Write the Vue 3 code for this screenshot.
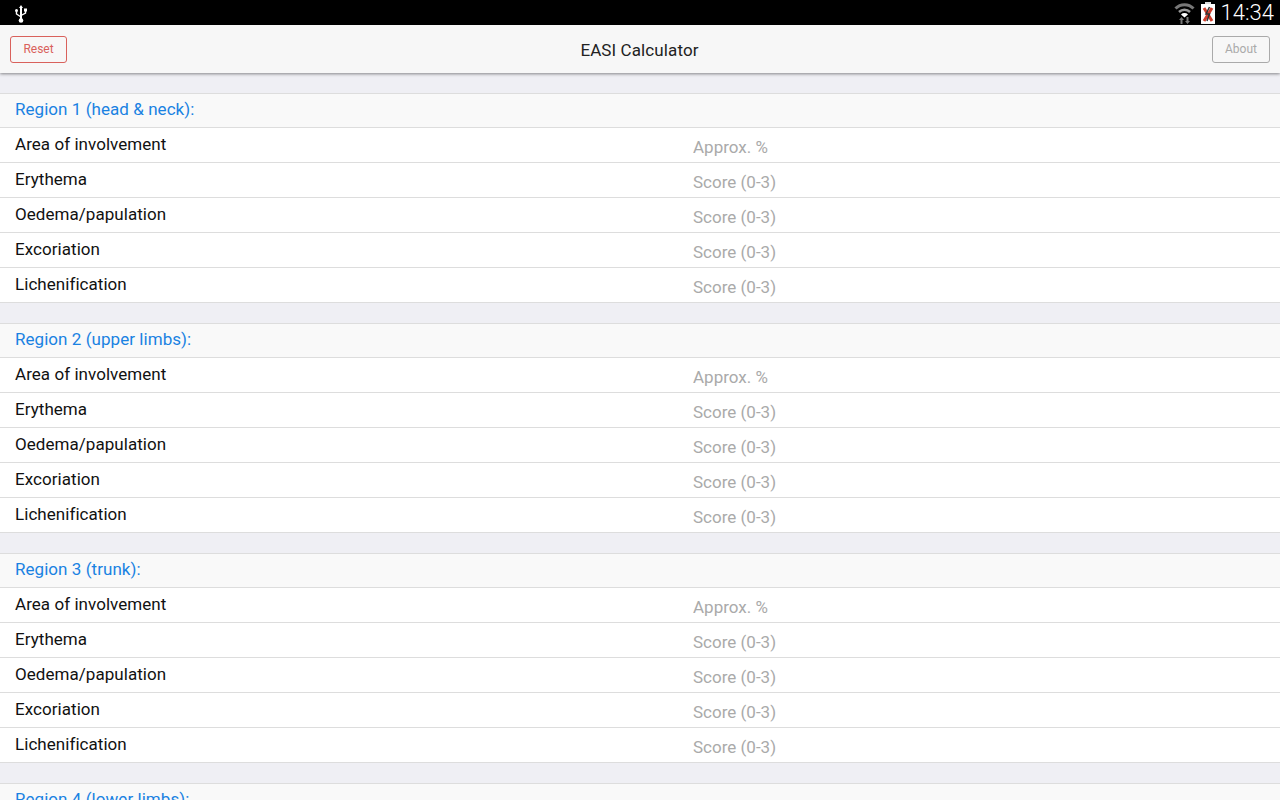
<script setup>
const rows = [
  { label: 'Area of involvement', hint: 'Approx. %' },
  { label: 'Erythema', hint: 'Score (0-3)' },
  { label: 'Oedema/papulation', hint: 'Score (0-3)' },
  { label: 'Excoriation', hint: 'Score (0-3)' },
  { label: 'Lichenification', hint: 'Score (0-3)' },
]

const regions = [
  'Region 1 (head & neck):',
  'Region 2 (upper limbs):',
  'Region 3 (trunk):',
  'Region 4 (lower limbs):',
]
</script>

<template>
  <div class="screen">
    <div class="status-bar">
      <svg class="usb" width="14" height="20" viewBox="0 0 14 20">
        <path d="M7 1 L9 4 H8 V15 H6 V4 H5 Z" fill="#fff" />
        <circle cx="7" cy="16.500" r="2.300" fill="#fff" />
        <path d="M7 13 L2.500 10 V7.500" fill="none" stroke="#fff" stroke-width="1.400" />
        <circle cx="2.500" cy="6.500" r="1.500" fill="#fff" />
        <path d="M7 11.500 L11.500 9 V7" fill="none" stroke="#fff" stroke-width="1.400" />
        <rect x="10" y="4.500" width="3" height="3" fill="#fff" />
      </svg>
      <div class="status-right">
        <svg width="21" height="22" viewBox="0 0 21 22">
          <path d="M1.500 6.500 A12.500 12.500 0 0 1 19.500 6.500" fill="none" stroke="#777" stroke-width="3" />
          <path d="M5 10 A8 8 0 0 1 16 10" fill="none" stroke="#999" stroke-width="2.500" />
          <path d="M7 12.500 A5 5 0 0 1 14 12.500 L10.500 15.500 Z" fill="#fff" />
          <path d="M7.500 15 L10 18 H8.500 V22 H6.500 V18 H5 Z" fill="#777" />
          <path d="M13.500 22 L16 19 H14.500 V15 H12.500 V19 H11 Z" fill="#777" />
        </svg>
        <svg class="battery" width="14" height="22" viewBox="0 0 14 22">
          <rect x="4" y="0" width="6" height="2" fill="#ddd" />
          <rect x="0" y="2" width="14" height="20" fill="#fff" />
          <path d="M3 6 L11 19 M11 6 L3 19" stroke="#d0402e" stroke-width="3" />
          <path d="M8.500 5 L5 12 H8.500 L6 19" fill="none" stroke="#333" stroke-width="1.500" />
        </svg>
        <span class="clock">14:34</span>
      </div>
    </div>

    <header class="nav-bar">
      <button class="nav-btn reset">Reset</button>
      <h1>EASI Calculator</h1>
      <button class="nav-btn about">About</button>
    </header>

    <section v-for="region in regions" :key="region" class="region">
      <div class="region-title">{{ region }}</div>
      <div v-for="row in rows" :key="row.label" class="row">
        <span class="label">{{ row.label }}</span>
        <input class="value" type="text" :placeholder="row.hint" />
      </div>
    </section>
  </div>
</template>

<style scoped>
.screen {
  height: 800px;
  overflow: hidden;
  background-color: #efeff4;
  font-family: Roboto, "Liberation Sans", sans-serif;
}

.status-bar {
  height: 25px;
  background-color: #000;
  display: flex;
  justify-content: space-between;
  align-items: center;
  padding: 0 6px 0 14px;
}

.usb {
  margin-top: 3px;
}

.status-right {
  display: flex;
  align-items: center;
  gap: 6px;
}

.clock {
  color: #fff;
  font-size: 22px;
  font-weight: 300;
}

.nav-bar {
  position: relative;
  height: 48px;
  background-color: #f7f7f7;
  box-shadow: 0 1px 3px rgba(0, 0, 0, 0.45);
  display: flex;
  justify-content: space-between;
  align-items: center;
  padding: 0 10px;
  margin-bottom: 20px;
}

.nav-bar h1 {
  margin: 2px 0 0;
  font-size: 17px;
  font-weight: 400;
  letter-spacing: 0.1px;
  color: #222;
}

.nav-btn {
  height: 27px;
  background: transparent;
  border-radius: 3px;
  font-family: inherit;
  font-size: 12px;
  padding: 0 12px;
}

.reset {
  border: 1px solid #d9615c;
  color: #d9615c;
  width: 57px;
}

.about {
  border: 1px solid #aaa;
  color: #aaa;
  width: 58px;
}

.region {
  margin-bottom: 20px;
  border-top: 1px solid #ddd;
  background-color: #fff;
}

.region-title {
  height: 33px;
  line-height: 30px;
  padding-left: 15px;
  font-size: 17px;
  letter-spacing: 0.05px;
  color: #1a82e2;
  background-color: #f9f9f9;
  border-bottom: 1px solid #ddd;
}

.row {
  height: 34px;
  border-bottom: 1px solid #ddd;
  display: flex;
  align-items: center;
  padding-left: 15px;
}

.label {
  width: 678px;
  font-size: 17px;
  letter-spacing: 0.05px;
  color: #111;
  margin-top: -3px;
}

.value {
  flex: 1;
  border: none;
  outline: none;
  background: transparent;
  padding: 0;
  font-family: inherit;
  font-size: 17px;
  margin-top: 3px;
}

.value::placeholder {
  color: #aaa;
}
</style>
